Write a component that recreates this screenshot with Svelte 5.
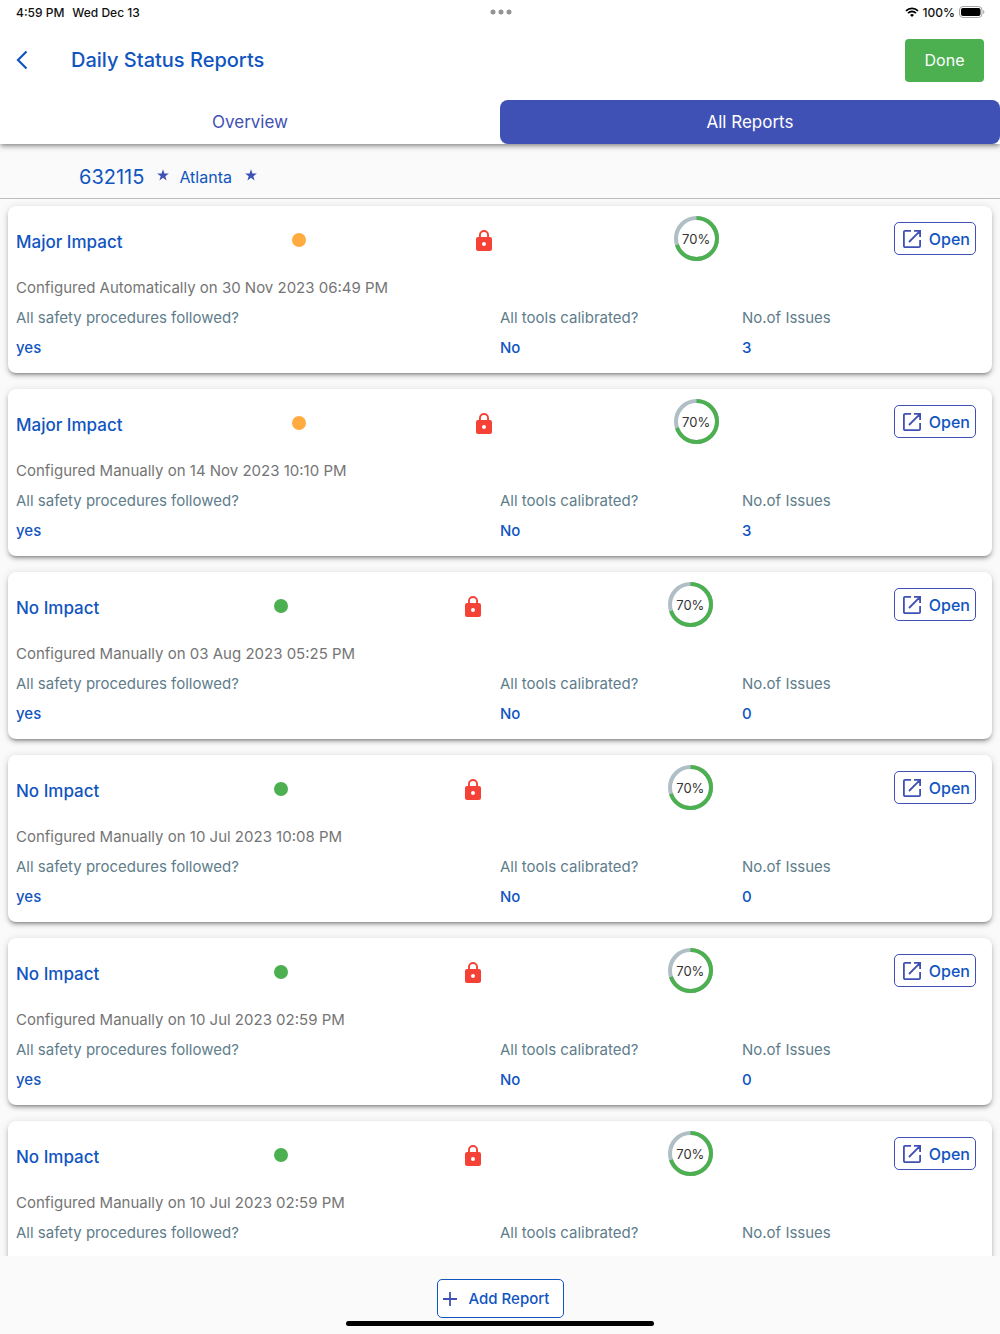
<script>
  let tab = $state('all');

  const tabs = [
    { id: 'overview', label: 'Overview' },
    { id: 'all', label: 'All Reports' },
  ];

  const reports = [
    { impact: 'Major', source: 'Automatically', date: '30 Nov 2023 06:49 PM', progress: 70, issues: 3 },
    { impact: 'Major', source: 'Manually', date: '14 Nov 2023 10:10 PM', progress: 70, issues: 3 },
    { impact: 'No', source: 'Manually', date: '03 Aug 2023 05:25 PM', progress: 70, issues: 0 },
    { impact: 'No', source: 'Manually', date: '10 Jul 2023 10:08 PM', progress: 70, issues: 0 },
    { impact: 'No', source: 'Manually', date: '10 Jul 2023 02:59 PM', progress: 70, issues: 0 },
    { impact: 'No', source: 'Manually', date: '10 Jul 2023 02:59 PM', progress: 70, issues: 0 },
  ];
</script>

{#snippet star()}
  <svg class="star" viewBox="0 0 24 24" aria-hidden="true">
    <path d="M12 0.5l2.9 8.3 8.8.2-7 5.3 2.5 8.5L12 17.7l-7.2 5.1 2.5-8.5-7-5.3 8.8-.2z" />
  </svg>
{/snippet}

<div class="page">
  <header>
    <div class="status-bar">
      <div class="status-side">
        <span>4:59 PM</span>
        <span>Wed Dec 13</span>
      </div>
      <svg class="dots" viewBox="0 0 22 6" aria-hidden="true">
        <circle cx="3" cy="3" r="2.5" />
        <circle cx="11" cy="3" r="2.5" />
        <circle cx="19" cy="3" r="2.5" />
      </svg>
      <div class="status-side right">
        <svg class="wifi" viewBox="0 0 14 10" aria-hidden="true">
          <path d="M1 3.9a8.6 8.6 0 0 1 12 0" />
          <path d="M3.1 6.1a5.6 5.6 0 0 1 7.8 0" />
          <path class="solid" d="M7 9.9L5 7.9a2.9 2.9 0 0 1 4 0z" />
        </svg>
        <span>100%</span>
        <svg class="battery" viewBox="0 0 26 12" aria-hidden="true">
          <rect class="shell" x="0.5" y="0.5" width="22.5" height="11" rx="3.5" />
          <rect x="2" y="2" width="19.5" height="8" rx="2" />
          <path class="cap" d="M24.2 4v4c1.6-.7 1.6-3.3 0-4z" />
        </svg>
      </div>
    </div>

    <div class="app-bar">
      <button class="back" aria-label="Back">
        <svg viewBox="0 0 12 20"><path d="M10.5 1.5L2 10l8.5 8.5" /></svg>
      </button>
      <h1>Daily Status Reports</h1>
      <button class="done">Done</button>
    </div>

    <nav class="tabs">
      {#each tabs as t}
        <button class:active={tab === t.id} onclick={() => (tab = t.id)}>{t.label}</button>
      {/each}
    </nav>
  </header>

  <div class="site">
    <span class="site-id">632115</span>
    {@render star()}
    <span class="site-name">Atlanta</span>
    {@render star()}
  </div>

  <main>
    {#each reports as report}
      <article class="card">
        <div class="card-head">
          <h2>{report.impact} Impact</h2>
          <span class="dot" class:major={report.impact === 'Major'}></span>
          <svg class="lock" viewBox="0 0 18 24" aria-label="Locked">
            <path
              fill-rule="evenodd"
              d="M15 8h-1V6A5 5 0 0 0 4 6v2H3a2 2 0 0 0-2 2v10c0 1.1.9 2 2 2h12a2 2 0 0 0 2-2V10a2 2 0 0 0-2-2zM9 17a2 2 0 1 1 0-4 2 2 0 0 1 0 4zM12.1 8H5.9V6a3.1 3.1 0 0 1 6.2 0z"
            />
          </svg>
          <div class="progress">
            <svg viewBox="0 0 45 45" aria-hidden="true">
              <circle class="track" cx="22.5" cy="22.5" r="20.5" />
              <circle
                class="bar"
                cx="22.5"
                cy="22.5"
                r="20.5"
                pathLength="100"
                stroke-dasharray="{report.progress} 100"
                transform="rotate(-90 22.5 22.5)"
              />
            </svg>
            <span>{report.progress}%</span>
          </div>
          <button class="outlined open">
            <svg viewBox="0 0 18 18" aria-hidden="true">
              <path d="M8 .9H2A1.1 1.1 0 0 0 .9 2v14A1.1 1.1 0 0 0 2 17.1h14a1.1 1.1 0 0 0 1.1-1.1V10M11 .9h6.1V7M17.1.9L6 12" />
            </svg>
            Open
          </button>
        </div>
        <p class="configured">Configured {report.source} on {report.date}</p>
        <dl>
          <div>
            <dt>All safety procedures followed?</dt>
            <dd>yes</dd>
          </div>
          <div>
            <dt>All tools calibrated?</dt>
            <dd>No</dd>
          </div>
          <div>
            <dt>No.of Issues</dt>
            <dd>{report.issues}</dd>
          </div>
        </dl>
      </article>
    {/each}
  </main>

  <footer>
    <button class="outlined add">
      <svg viewBox="0 0 14 14" aria-hidden="true"><path d="M7 0v14M0 7h14" /></svg>
      Add Report
    </button>
    <div class="home-indicator"></div>
  </footer>
</div>

<style>
  :global(body) {
    margin: 0;
    background: #fafafa;
  }

  .page {
    height: 100vh;
    display: flex;
    flex-direction: column;
    font-family: Inter, 'Liberation Sans', sans-serif;
    color: #1155c0;
    background: #fafafa;
  }

  button {
    font-family: inherit;
    border: none;
    background: none;
    padding: 0;
    cursor: pointer;
  }

  svg {
    display: block;
    flex-shrink: 0;
  }

  header {
    position: relative;
    z-index: 1;
    background: #fff;
    box-shadow: 0 2px 4px -1px rgba(0, 0, 0, 0.3), 0 3px 5px rgba(0, 0, 0, 0.16), 0 1px 8px rgba(0, 0, 0, 0.12);
  }

  .status-bar {
    display: flex;
    align-items: center;
    justify-content: space-between;
    height: 24px;
    padding: 0 15px 0 16px;
    font-size: 12px;
    font-weight: 500;
    color: #111;
  }

  .status-side {
    flex: 1;
    display: flex;
    align-items: center;
    gap: 8px;
  }

  .status-side.right {
    justify-content: flex-end;
    gap: 4px;
  }

  .dots {
    width: 22px;
    fill: #949494;
  }

  .wifi {
    width: 14px;
    fill: none;
    stroke: #000;
    stroke-width: 1.8;
  }

  .wifi .solid {
    fill: #000;
    stroke: none;
  }

  .battery {
    width: 26px;
  }

  .battery .shell {
    fill: none;
    stroke: #a6a6a6;
  }

  .battery .cap {
    fill: #a6a6a6;
  }

  .app-bar {
    display: flex;
    align-items: center;
    height: 72px;
    padding: 0 16px;
  }

  .back {
    width: 55px;
  }

  .back svg {
    width: 12px;
    fill: none;
    stroke: #1155c0;
    stroke-width: 2.2;
  }

  h1 {
    flex: 1;
    margin: 0;
    font-size: 20px;
    font-weight: 500;
  }

  .done {
    width: 79px;
    height: 43px;
    border-radius: 4px;
    background: #4caf50;
    color: #fff;
    font-size: 16px;
  }

  .tabs {
    display: flex;
    padding-top: 4px;
  }

  .tabs button {
    flex: 1;
    height: 44px;
    border-radius: 8px;
    color: #3f51b5;
    font-size: 17px;
  }

  .tabs button.active {
    background: #3f51b5;
    color: #fff;
  }

  .site {
    display: flex;
    align-items: center;
    box-sizing: border-box;
    height: 55px;
    padding: 12px 79px 0;
    border-bottom: 1px solid #bdbdbd;
  }

  .site-id {
    font-size: 20px;
  }

  .site-name {
    font-size: 16px;
  }

  .star {
    width: 12px;
    margin: 0 10px 4px 13px;
    fill: #3f51b5;
  }

  main {
    flex: 1;
    min-height: 0;
    overflow-y: auto;
    scrollbar-width: none;
    display: flex;
    flex-direction: column;
    gap: 16px;
    padding: 7px 8px;
  }

  .card {
    flex-shrink: 0;
    padding: 10px 8px;
    border-radius: 8px;
    background: #fff;
    box-shadow: 0 3px 3px -2px rgba(0, 0, 0, 0.3), 0 3px 4px rgba(0, 0, 0, 0.18), 0 1px 8px rgba(0, 0, 0, 0.12);
  }

  .card-head {
    display: flex;
    align-items: center;
    justify-content: space-between;
    padding-right: 8px;
    margin-bottom: 12px;
  }

  h2 {
    margin: 0;
    padding-top: 7px;
    font-size: 17px;
    font-weight: 500;
  }

  .dot {
    width: 14px;
    height: 14px;
    margin-top: 2px;
    border-radius: 50%;
    background: #4caf50;
  }

  .dot.major {
    background: #ffab40;
  }

  .lock {
    width: 18px;
    margin-top: 4px;
    fill: #f44336;
  }

  .progress {
    display: grid;
    place-items: center;
    margin: 0 6px 0 11px;
    font-size: 13px;
    color: #333;
  }

  .progress svg,
  .progress span {
    grid-area: 1 / 1;
  }

  .progress svg {
    width: 45px;
    fill: none;
    stroke-width: 4;
  }

  .track {
    stroke: #b0bec5;
  }

  .bar {
    stroke: #4caf50;
  }

  .outlined {
    display: flex;
    align-items: center;
    box-sizing: border-box;
    border: 1px solid #3f51b5;
    border-radius: 5px;
    color: #1155c0;
    font-weight: 500;
  }

  .outlined svg {
    fill: none;
    stroke: #3f51b5;
    stroke-width: 1.8;
  }

  .open {
    justify-content: space-between;
    width: 82px;
    height: 33px;
    padding: 0 5px 0 8px;
    font-size: 16px;
  }

  .open svg {
    width: 18px;
  }

  p,
  dl,
  dd {
    margin: 0;
  }

  .configured,
  dl {
    font-size: 15px;
    line-height: 30px;
  }

  .configured {
    color: #757575;
  }

  dl {
    display: grid;
    grid-template-columns: 2fr 1fr 1fr;
  }

  dt {
    color: #607d8b;
  }

  dd {
    font-weight: 500;
  }

  footer {
    display: flex;
    flex-direction: column;
    align-items: center;
    justify-content: space-between;
    box-sizing: border-box;
    height: 78px;
    padding: 23px 0 8px;
  }

  .add {
    gap: 12px;
    width: 127px;
    height: 39px;
    padding: 0 5px;
    border-color: #1155c0;
    background: #fff;
    font-size: 15px;
    white-space: nowrap;
  }

  .add svg {
    width: 14px;
  }

  .home-indicator {
    width: 308px;
    height: 5px;
    border-radius: 3px;
    background: #000;
  }
</style>
